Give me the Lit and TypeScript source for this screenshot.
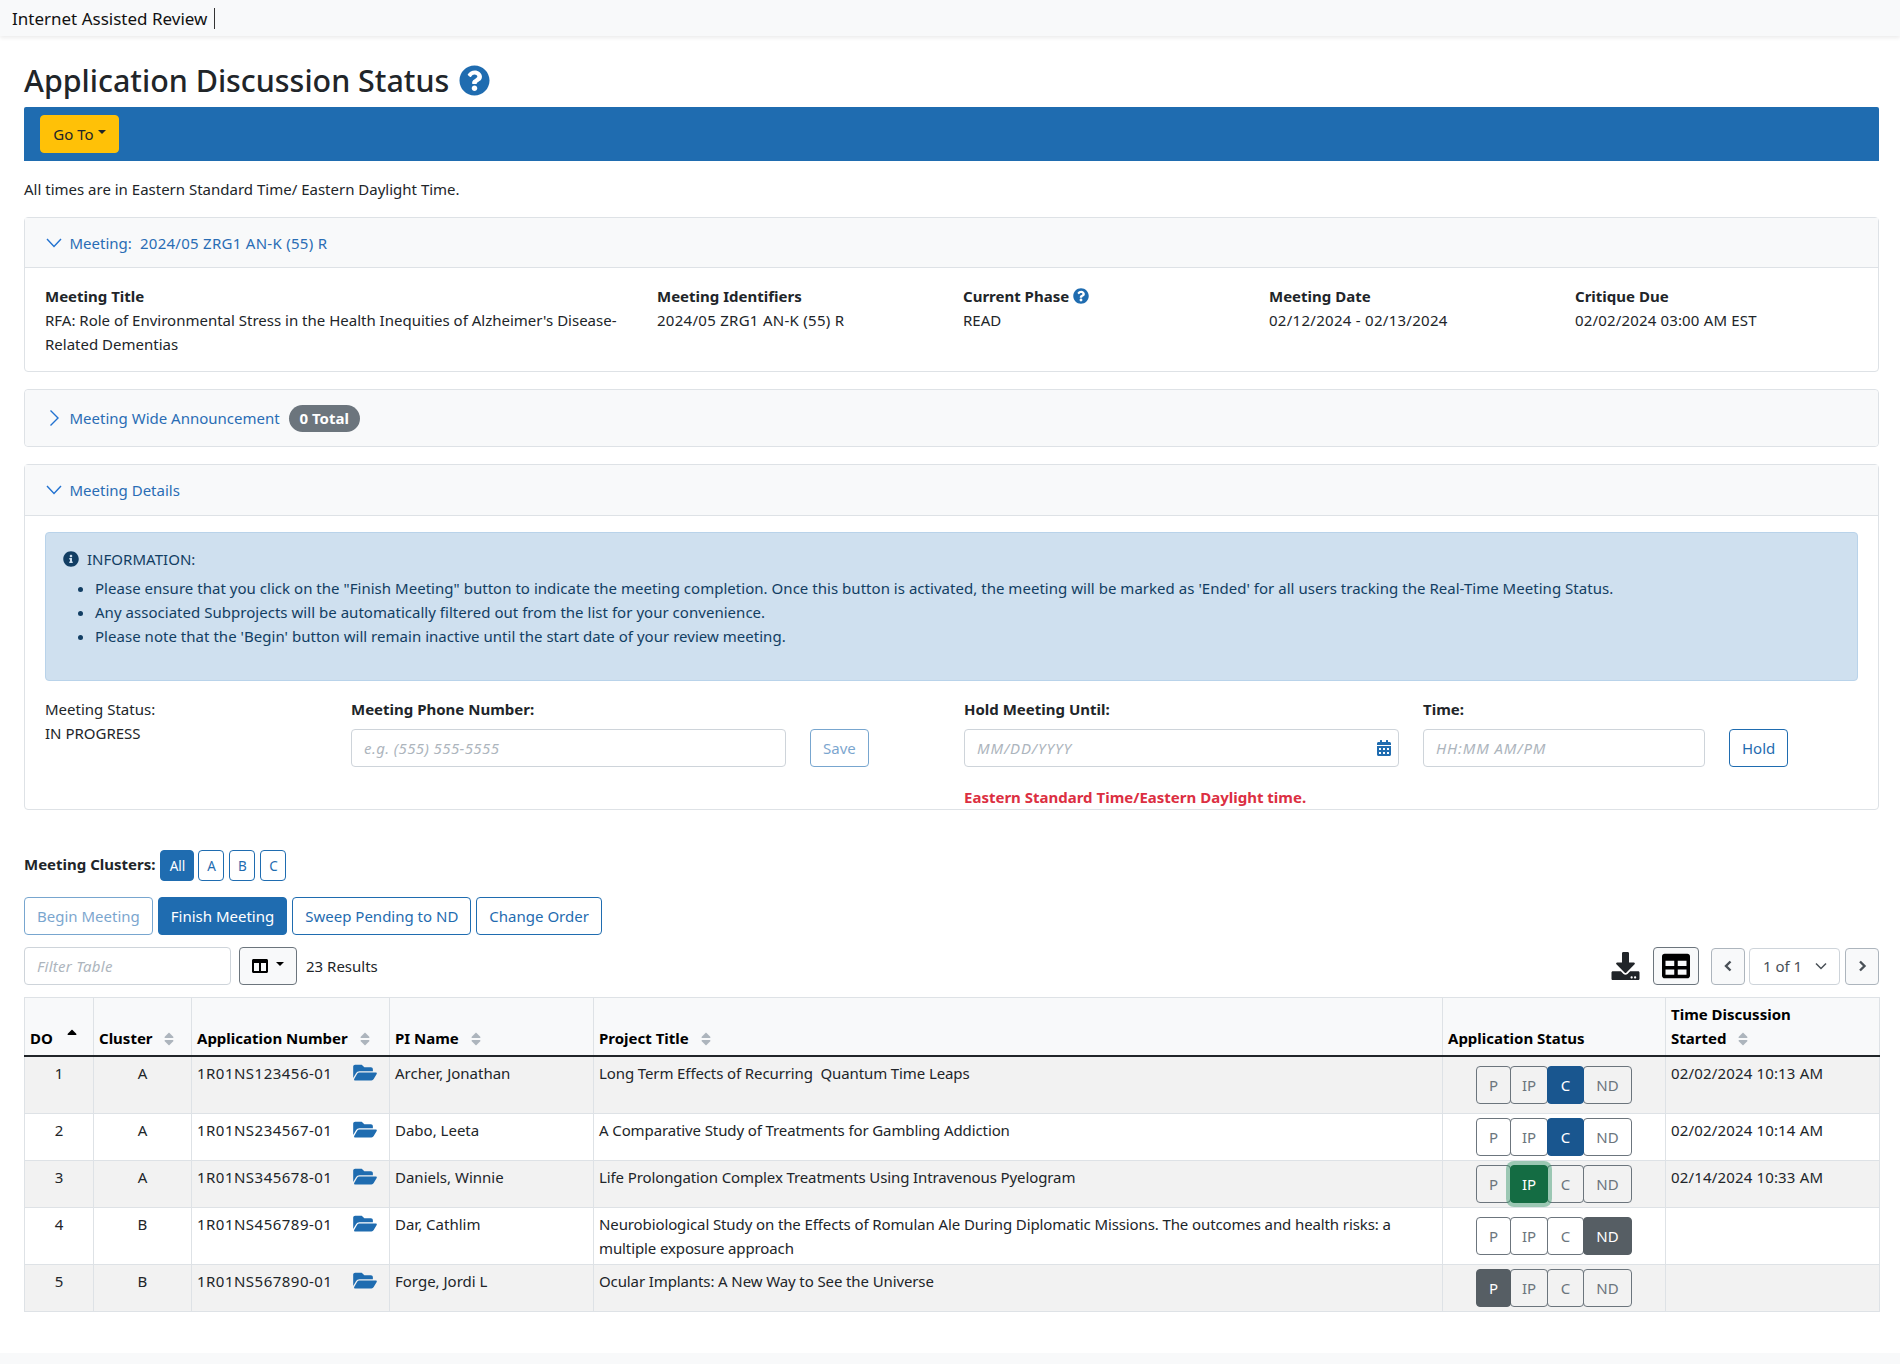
import { LitElement, html, css, svg } from "lit";
import { customElement } from "lit/decorators.js";

const Q = "M504 256c0 136.997-111.043 248-248 248S8 392.997 8 256C8 119.083 119.043 8 256 8s248 111.083 248 248zM262.655 90c-54.497 0-89.255 22.957-116.549 63.758-3.536 5.286-2.353 12.415 2.715 16.258l34.699 26.31c5.205 3.947 12.621 3.008 16.665-2.122 17.864-22.658 30.113-35.797 57.303-35.797 20.429 0 45.698 13.148 45.698 32.958 0 14.976-12.363 22.667-32.534 33.976C247.128 238.528 216 254.941 216 296v4c0 6.627 5.373 12 12 12h56c6.627 0 12-5.373 12-12v-1.333c0-28.462 83.186-29.647 83.186-106.667 0-58.002-60.165-102-116.531-102zM256 338c-25.365 0-46 20.635-46 46 0 25.364 20.635 46 46 46s46-20.636 46-46c0-25.365-20.635-46-46-46z";
const INFO = "M256 8C119.043 8 8 119.083 8 256c0 136.997 111.043 248 248 248s248-111.003 248-248C504 119.083 392.957 8 256 8zm0 110c23.196 0 42 18.804 42 42s-18.804 42-42 42-42-18.804-42-42 18.804-42 42-42zm56 254c0 6.627-5.373 12-12 12h-88c-6.627 0-12-5.373-12-12v-24c0-6.627 5.373-12 12-12h12v-64h-12c-6.627 0-12-5.373-12-12v-24c0-6.627 5.373-12 12-12h64c6.627 0 12 5.373 12 12v100h12c6.627 0 12 5.373 12 12v24z";
const FOLDER = "M572.694 292.093L500.27 416.248A63.997 63.997 0 0 1 444.989 448H45.025c-18.523 0-30.064-20.093-20.731-36.093l72.424-124.155A64 64 0 0 1 152 256h399.964c18.523 0 30.064 20.093 20.73 36.093zM152 224h328v-48c0-26.51-21.49-48-48-48H272l-64-64H48C21.49 64 0 85.49 0 112v278.046l69.077-118.418C86.214 242.25 117.989 224 152 224z";
const SORT = "M41 288h238c21.4 0 32.1 25.9 17 41L177 448c-9.4 9.4-24.6 9.4-33.9 0L24 329c-15.1-15.1-4.4-41 17-41zm255-105L177 64c-9.4-9.4-24.6-9.4-33.9 0L24 183c-15.1 15.1-4.4 41 17 41h238c21.4 0 32.1-25.9 17-41z";
const SORTUP = "M279 224H41c-21.4 0-32.1-25.9-17-41L143 64c9.4-9.4 24.6-9.4 33.9 0l119 119c15.2 15.1 4.5 41-16.9 41z";
const DL = "M216 0h80c13.3 0 24 10.7 24 24v168h87.7c17.8 0 26.7 21.5 14.1 34.1L269.7 378.3c-7.5 7.5-19.8 7.5-27.3 0L90.1 226.1c-12.6-12.6-3.7-34.1 14.1-34.1H192V24c0-13.3 10.7-24 24-24zm296 376v112c0 13.3-10.7 24-24 24H24c-13.3 0-24-10.7-24-24V376c0-13.3 10.7-24 24-24h146.7l49 49c20.1 20.1 52.5 20.1 72.6 0l49-49H488c13.3 0 24 10.7 24 24zm-124 88c0-11-9-20-20-20s-20 9-20 20 9 20 20 20 20-9 20-20zm64 0c0-11-9-20-20-20s-20 9-20 20 9 20 20 20 20-9 20-20z";
const TABLE = "M464 32H48C21.49 32 0 53.49 0 80v352c0 26.51 21.49 48 48 48h416c26.51 0 48-21.49 48-48V80c0-26.51-21.49-48-48-48zM224 416H64v-96h160v96zm0-160H64v-96h160v96zm224 160H288v-96h160v96zm0-160H288v-96h160v96z";
const COLS = "M464 32H48C21.49 32 0 53.49 0 80v352c0 26.51 21.49 48 48 48h416c26.51 0 48-21.49 48-48V80c0-26.51-21.49-48-48-48zM224 416H64V160h160v256zm224 0H288V160h160v256z";
const CAL = "M0 464c0 26.5 21.5 48 48 48h352c26.5 0 48-21.5 48-48V192H0v272zm320-196c0-6.6 5.4-12 12-12h40c6.6 0 12 5.4 12 12v40c0 6.6-5.4 12-12 12h-40c-6.6 0-12-5.4-12-12v-40zm0 128c0-6.6 5.4-12 12-12h40c6.6 0 12 5.4 12 12v40c0 6.6-5.4 12-12 12h-40c-6.6 0-12-5.4-12-12v-40zM192 268c0-6.6 5.4-12 12-12h40c6.6 0 12 5.4 12 12v40c0 6.6-5.4 12-12 12h-40c-6.6 0-12-5.4-12-12v-40zm0 128c0-6.6 5.4-12 12-12h40c6.6 0 12 5.4 12 12v40c0 6.6-5.4 12-12 12h-40c-6.6 0-12-5.4-12-12v-40zM64 268c0-6.6 5.4-12 12-12h40c6.6 0 12 5.4 12 12v40c0 6.6-5.4 12-12 12H76c-6.6 0-12-5.4-12-12v-40zm0 128c0-6.6 5.4-12 12-12h40c6.6 0 12 5.4 12 12v40c0 6.6-5.4 12-12 12H76c-6.6 0-12-5.4-12-12v-40zM400 64h-48V16c0-8.8-7.2-16-16-16h-32c-8.8 0-16 7.2-16 16v48H160V16c0-8.8-7.2-16-16-16h-32c-8.8 0-16 7.2-16 16v48H48C21.5 64 0 85.5 0 112v48h448v-48c0-26.5-21.5-48-48-48z";

const icon = (d: string, vb: string, cls: string) =>
  html`<svg class=${cls} viewBox=${vb} aria-hidden="true">${svg`<path d=${d} fill="currentColor"></path>`}</svg>`;
const chev = (dir: "down" | "right") =>
  html`<svg class="chev" viewBox="0 0 16 16" aria-hidden="true">${svg`<polyline points=${dir === "down" ? "1,4 8,11.5 15,4" : "4.5,0.5 12,8 4.5,15.5"} fill="none" stroke="currentColor" stroke-width="1.4"></polyline>`}</svg>`;
const sortI = (up = false) => icon(up ? SORTUP : SORT, "0 0 320 512", up ? "sort up" : "sort");

type Row = { do: string; cl: string; app: string; pi: string; title: string; st: string; time: string; tall?: boolean };
const ROWS: Row[] = [
  { do: "1", cl: "A", app: "1R01NS123456-01", pi: "Archer, Jonathan", title: "Long Term Effects of Recurring\u00a0 Quantum Time Leaps", st: "C", time: "02/02/2024 10:13 AM", tall: true },
  { do: "2", cl: "A", app: "1R01NS234567-01", pi: "Dabo, Leeta", title: "A Comparative Study of Treatments for Gambling Addiction", st: "C", time: "02/02/2024 10:14 AM" },
  { do: "3", cl: "A", app: "1R01NS345678-01", pi: "Daniels, Winnie", title: "Life Prolongation Complex Treatments Using Intravenous Pyelogram", st: "IP", time: "02/14/2024 10:33 AM" },
  { do: "4", cl: "B", app: "1R01NS456789-01", pi: "Dar, Cathlim", title: "Neurobiological Study on the Effects of Romulan Ale During Diplomatic Missions. The outcomes and health risks: a multiple exposure approach", st: "ND", time: "", tall: true },
  { do: "5", cl: "B", app: "1R01NS567890-01", pi: "Forge, Jordi L", title: "Ocular Implants: A New Way to See the Universe", st: "P", time: "" },
];

@customElement("app-root")
export class AppRoot extends LitElement {
  static styles = css`
    :host { display: block; font-family: "Noto Sans", "Open Sans", sans-serif; font-size: 15px; line-height: 24px; color: #212529; background: #fff; height: 1364px; overflow: hidden; }
    * { box-sizing: border-box; }
    svg { display: block; flex: none; }
    .topbar { height: 36px; background: #f8f9fa; box-shadow: 0 2px 4px rgba(0,0,0,.08); display: flex; align-items: center; padding-left: 12px; color: #111; font-size: 17px; }
    .topbar span { padding-right: 7px; border-right: 1px solid #333; line-height: 21px; }
    main { padding: 0 21px 0 24px; }
    h1 { margin: 25px 0 6px; font-size: 30.4px; line-height: 40px; font-weight: 500; display: flex; align-items: center; gap: 10px; color: #212529; }
    .help-lg { width: 31px; height: 31px; color: #1f6cb0; margin-bottom: 2px; }
    .bar { height: 54px; background: #1f6cb0; padding: 8px 16px; border-radius: 2px 2px 0 0; }
    .goto { height: 38px; width: 79px; background: #ffc107; border: 1px solid #ffc107; border-radius: 4px; color: #212529; display: flex; align-items: center; justify-content: center; gap: 4px; }
    .caret { width: 0; height: 0; border-left: 4.5px solid transparent; border-right: 4.5px solid transparent; border-top: 4.5px solid currentColor; margin-bottom: 4px; }
    .note { margin: 16px 0 16px; }
    .card { border: 1px solid #dee2e6; border-radius: 4px; margin-bottom: 17px; background: #fff; }
    .card-h { background: #f8f9fa; height: 50px; display: flex; align-items: center; padding-left: 21px; color: #2a6db5; border-bottom: 1px solid #dee2e6; }
    .card-h.tall51 { height: 51px; }
    .card-h.closed { height: 56px; border-bottom: 0; border-radius: 4px; }
    .chev { width: 16px; height: 16px; margin-right: 7.5px; color: #2272d0; }
    .badge { margin-left: 9px; height: 27px; width: 71px; border-radius: 14px; background: #6c757d; color: #fff; font-weight: 700; display: flex; align-items: center; justify-content: center; }
    .info-row { display: grid; grid-template-columns: 612px 306px 306px 306px 1fr; padding: 16px 20px 15px; }
    .info-row b { display: flex; align-items: center; gap: 4px; font-weight: 700; }
    .info-row .first { padding-right: 24px; }
    .num-a { letter-spacing: .28px; }
    .num-b { letter-spacing: .16px; }
    .help-sm { width: 16px; height: 16px; color: #1f6cb0; }
    .card-b { padding: 16px 20px 2px; }
    .alert { background: #cfe0ef; border: 1px solid #b9d3ea; border-radius: 4px; color: #123e63; height: 149px; padding: 14px 17px; letter-spacing: .03px; }
    .alert-h { display: flex; align-items: center; gap: 8px; margin-bottom: 5px; }
    .alert-h svg { width: 16px; height: 16px; }
    .alert ul { margin: 0; padding-left: 32px; }
    .form { display: grid; grid-template-columns: 306px 613px 459px 1fr; margin-top: 16px; }
    .form label { display: block; font-weight: 700; margin-bottom: 8px; }
    .ctrl { display: flex; gap: 24px; }
    .input { height: 38px; border: 1px solid #ced4da; border-radius: 4px; padding: 0 12px; display: flex; align-items: center; justify-content: space-between; color: #adb5bd; font-style: italic; background: #fff; }
    .w435 { width: 435px; } .w434 { width: 435px; padding-right: 7px; } .w282 { width: 282px; } .w207 { width: 207px; }
    .ls-a { letter-spacing: .4px; } .ls-b { letter-spacing: .85px; } .ls-c { letter-spacing: .3px; }
    .cal { width: 14px; height: 16px; color: #1f6cb0; }
    .btn { height: 38px; border: 1px solid #1f6cb0; border-radius: 4px; color: #1f6cb0; background: #fff; display: flex; align-items: center; justify-content: center; padding: 0 12px; white-space: nowrap; }
    .btn.off { opacity: .6; }
    .btn.on { background: #1f6cb0; color: #fff; }
    .err { color: #dc2f42; font-weight: 700; line-height: 20px; margin-top: 20px; white-space: nowrap; }
    .card.last { margin-bottom: 40px; }
    .clusters { display: flex; align-items: center; height: 31px; }
    .clusters b { font-weight: 700; margin: 0 5px 3px 0; }
    .cb { height: 31px; width: 26px; font-size: 13.5px; padding: 0; margin-right: 5px; }
    .cb.all { width: 34px; margin-right: 4px; }
    .actions { display: flex; gap: 5px; margin-top: 16px; }
    .tools { display: flex; align-items: center; margin-top: 12px; height: 38px; }
    .colbtn { width: 58px; height: 38px; margin-left: 8px; border: 1px solid #6c757d; border-radius: 4px; background: #f8f9fa; display: flex; align-items: center; justify-content: center; gap: 8px; color: #000; }
    .colbtn svg { width: 16px; height: 16px; }
    .results { margin-left: 9px; }
    .right { margin-left: auto; display: flex; align-items: center; }
    .dl { width: 29px; height: 28px; color: #212529; margin-right: 13px; }
    .togg { width: 46px; height: 38px; border: 1px solid #6c757d; border-radius: 4px; background: #f8f9fa; display: flex; align-items: center; justify-content: center; color: #000; margin-right: 12px; }
    .togg svg { width: 28px; height: 28px; }
    .pg { width: 34px; height: 37px; border: 1px solid #adb5bd; border-radius: 4px; background: #f8f9fa; display: flex; align-items: center; justify-content: center; color: #495057; }
    .pg svg { width: 10px; height: 12px; }
    .sel { width: 91px; height: 37px; border: 1px solid #ced4da; border-radius: 4px; margin: 0 5px 0 4px; display: flex; align-items: center; justify-content: space-between; padding: 0 12px 0 13px; color: #495057; }
    .sel svg { width: 12px; height: 8px; }
    table { margin-top: 12px; width: 1855px; table-layout: fixed; border-collapse: collapse; color: #000; }
    .k1 { width: 69px; } .k2 { width: 98px; } .k3 { width: 198px; } .k4 { width: 204px; } .k5 { width: 849px; } .k6 { width: 223px; } .k7 { width: 214px; }
    th, td { border: 1px solid #dee2e6; padding: 4px 5px 5px; text-align: left; vertical-align: top; font-weight: 400; }
    th { background: #f8f9fa; font-weight: 700; vertical-align: bottom; border-bottom: 2px solid #212529; color: #000; }
    td { color: #212529; padding-bottom: 0; }
    .sort { display: inline-block; width: 10px; height: 16px; margin-left: 8px; vertical-align: -3px; color: #adb5bd; }
    .sort.up { color: #000; margin-left: 10px; vertical-align: 0; }
    tbody tr:nth-child(odd) td { background: #f2f2f2; }
    tr.norm { height: 47px; } tr.tall { height: 57px; }
    .c { text-align: center; }
    .appc { display: flex; justify-content: space-between; padding-right: 7px; }
    .appc span { letter-spacing: .48px; }
    .folder { width: 24px; height: 21px; color: #1f6cb0; margin-top: 1px; }
    .ttl { letter-spacing: -.11px; }
    td.stc { vertical-align: middle; padding: 0; }
    .sts { display: flex; justify-content: center; }
    .st { height: 38px; border: 1px solid #6c757d; border-radius: 4px; margin-left: -1px; display: flex; align-items: center; justify-content: center; color: #6c757d; background: transparent; }
    .st.P { width: 35px; margin-left: 0; } .st.IP { width: 38px; } .st.C { width: 37px; } .st.ND { width: 49px; }
    .st.act { color: #fff; position: relative; z-index: 1; }
    .st.blue { background: #19568f; border-color: #19568f; }
    .st.green { background: #146c43; border-color: #146c43; box-shadow: 0 0 0 4px rgba(25,135,84,.4); z-index: 2; }
    .st.gray { background: #565e64; border-color: #565e64; }
    footer { height: 12px; margin-top: 41px; background: #f8f9fa; }
  `;

  private status(active: string) {
    const tone = active === "C" ? "blue" : active === "IP" ? "green" : "gray";
    return html`<div class="sts">${["P", "IP", "C", "ND"].map(
      (s) => html`<div class="st ${s} ${s === active ? "act " + tone : ""}">${s}</div>`
    )}</div>`;
  }

  render() {
    return html`
      <div class="topbar"><span>Internet Assisted Review</span></div>
      <main>
        <h1>Application Discussion Status ${icon(Q, "0 0 512 512", "help-lg")}</h1>
        <div class="bar"><div class="goto">Go To<i class="caret"></i></div></div>
        <div class="note">All times are in Eastern Standard Time/ Eastern Daylight Time.</div>

        <section class="card">
          <div class="card-h">${chev("down")}<span>Meeting:&nbsp;<span class="num-a"> 2024/05 ZRG1 AN-K (55) R</span></span></div>
          <div class="info-row">
            <div class="first"><b>Meeting Title</b>RFA: Role of Environmental Stress in the Health Inequities of Alzheimer's Disease-Related Dementias</div>
            <div><b>Meeting Identifiers</b><span class="num-a">2024/05 ZRG1 AN-K (55) R</span></div>
            <div><b>Current Phase ${icon(Q, "0 0 512 512", "help-sm")}</b>READ</div>
            <div><b>Meeting Date</b><span class="num-a">02/12/2024 - 02/13/2024</span></div>
            <div><b>Critique Due</b><span class="num-b">02/02/2024 03:00 AM EST</span></div>
          </div>
        </section>

        <section class="card">
          <div class="card-h closed">${chev("right")}<span>Meeting Wide Announcement</span><span class="badge">0 Total</span></div>
        </section>

        <section class="card last">
          <div class="card-h tall51">${chev("down")}<span>Meeting Details</span></div>
          <div class="card-b">
            <div class="alert">
              <div class="alert-h">${icon(INFO, "0 0 512 512", "")}<span>INFORMATION:</span></div>
              <ul>
                <li>Please ensure that you click on the "Finish Meeting" button to indicate the meeting completion. Once this button is activated, the meeting will be marked as 'Ended' for all users tracking the Real-Time Meeting Status.</li>
                <li>Any associated Subprojects will be automatically filtered out from the list for your convenience.</li>
                <li>Please note that the 'Begin' button will remain inactive until the start date of your review meeting.</li>
              </ul>
            </div>
            <div class="form">
              <div>Meeting Status:<br />IN PROGRESS</div>
              <div>
                <label>Meeting Phone Number:</label>
                <div class="ctrl"><div class="input w435 ls-a">e.g. (555) 555-5555</div><div class="btn off">Save</div></div>
              </div>
              <div>
                <label>Hold Meeting Until:</label>
                <div class="input w434 ls-b">MM/DD/YYYY ${icon(CAL, "0 0 448 512", "cal")}</div>
                <div class="err">Eastern Standard Time/Eastern Daylight time.</div>
              </div>
              <div>
                <label>Time:</label>
                <div class="ctrl"><div class="input w282 ls-b">HH:MM AM/PM</div><div class="btn">Hold</div></div>
              </div>
            </div>
          </div>
        </section>

        <div class="clusters">
          <b>Meeting Clusters:</b>
          <div class="btn on cb all">All</div>
          <div class="btn cb">A</div><div class="btn cb">B</div><div class="btn cb">C</div>
        </div>
        <div class="actions">
          <div class="btn off">Begin Meeting</div>
          <div class="btn on">Finish Meeting</div>
          <div class="btn">Sweep Pending to ND</div>
          <div class="btn">Change Order</div>
        </div>
        <div class="tools">
          <div class="input w207 ls-c">Filter Table</div>
          <div class="colbtn">${icon(COLS, "0 0 512 512", "")}<i class="caret"></i></div>
          <div class="results">23 Results</div>
          <div class="right">
            ${icon(DL, "0 0 512 512", "dl")}
            <div class="togg">${icon(TABLE, "0 0 512 512", "")}</div>
            <div class="pg"><svg viewBox="0 0 10 12">${svg`<polyline points="7.5,1.5 3,6 7.5,10.5" fill="none" stroke="currentColor" stroke-width="2.4"></polyline>`}</svg></div>
            <div class="sel">1 of 1 <svg viewBox="0 0 12 8">${svg`<polyline points="1,1.5 6,6.5 11,1.5" fill="none" stroke="currentColor" stroke-width="1.5"></polyline>`}</svg></div>
            <div class="pg"><svg viewBox="0 0 10 12">${svg`<polyline points="3,1.5 7.5,6 3,10.5" fill="none" stroke="currentColor" stroke-width="2.4"></polyline>`}</svg></div>
          </div>
        </div>
        <table>
          <colgroup>
            <col class="k1" /><col class="k2" /><col class="k3" /><col class="k4" /><col class="k5" /><col class="k6" /><col class="k7" />
          </colgroup>
          <thead>
            <tr>
              <th>DO ${sortI(true)}</th>
              <th>Cluster ${sortI()}</th>
              <th>Application Number ${sortI()}</th>
              <th>PI Name ${sortI()}</th>
              <th>Project Title ${sortI()}</th>
              <th>Application Status</th>
              <th>Time Discussion<br />Started ${sortI()}</th>
            </tr>
          </thead>
          <tbody>
            ${ROWS.map(
              (r) => html`<tr class=${r.tall ? "tall" : "norm"}>
                <td class="c">${r.do}</td>
                <td class="c">${r.cl}</td>
                <td><div class="appc"><span>${r.app}</span>${icon(FOLDER, "0 0 576 512", "folder")}</div></td>
                <td>${r.pi}</td>
                <td class="ttl">${r.title}</td>
                <td class="stc">${this.status(r.st)}</td>
                <td class="num-b">${r.time}</td>
              </tr>`
            )}
          </tbody>
        </table>
      </main>
      <footer></footer>
    `;
  }
}
